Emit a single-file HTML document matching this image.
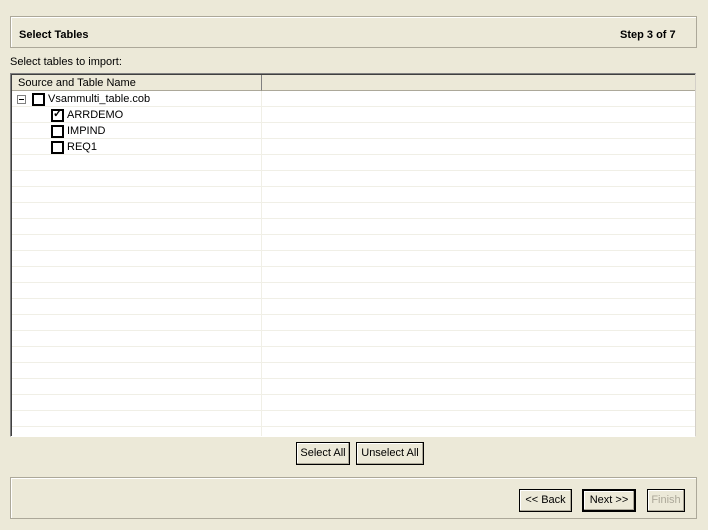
<html><head><style>
body{margin:0;width:708px;height:530px;background:#ece9d8;font-family:"Liberation Sans",sans-serif;font-size:11px;position:relative;overflow:hidden}
.a{position:absolute}
.btn{position:absolute;border:1px solid #000;background:#ece9d8;box-shadow:inset -1px -1px #aca899,inset 1px 1px #fff;text-align:center;box-sizing:border-box;line-height:21px}
.cb{position:absolute;width:9px;height:9px;border:2px solid #000;background:#fff}
.row{position:absolute;left:1px;width:683px;height:15px;border-bottom:1px solid #f0efe6}
</style></head><body>
<div class="a" style="left:10px;top:16px;width:685px;height:30px;border:1px solid #aca899;box-shadow:inset 1px 1px #fff"></div>
<div class="a" style="left:19px;top:29px;font-weight:bold">Select Tables</div>
<div class="a" style="left:620px;top:29px;font-weight:bold">Step 3 of 7</div>
<div class="a" style="left:10px;top:56px">Select tables to import:</div>
<div class="a" style="left:10px;top:73px;width:684px;height:362px;border:1px solid #808080;border-right-color:#d4d0c8;border-bottom-color:#fff;box-shadow:inset 1px 1px #404040;background:#fff;overflow:hidden">
<div class="a" style="left:1px;top:1px;width:243px;height:15px;background:#ece9d8;border-right:1px solid #808080;border-bottom:1px solid #aca899;padding-left:6px;line-height:16px">Source and Table Name</div>
<div class="a" style="left:251px;top:1px;width:440px;height:15px;background:#ece9d8;border-bottom:1px solid #aca899"></div>
<div class="a" style="left:250px;top:17px;width:1px;height:350px;background:#f0efe6"></div>
<div id="rows"></div>
</div>
<div class="a" style="left:17px;top:95px;width:7px;height:7px;border:1px solid #808080;background:#fff"></div>
<div class="a" style="left:19px;top:99px;width:5px;height:1px;background:#000"></div>
<div class="cb" style="left:32px;top:93px"></div><div class="a" style="left:48px;top:93px">Vsammulti_table.cob</div>
<div class="cb" style="left:51px;top:109px"></div><div class="a" style="left:53px;top:107px;font-size:11px;font-weight:bold">✓</div><div class="a" style="left:67px;top:109px">ARRDEMO</div>
<div class="cb" style="left:51px;top:125px"></div><div class="a" style="left:67px;top:125px">IMPIND</div>
<div class="cb" style="left:51px;top:141px"></div><div class="a" style="left:67px;top:141px">REQ1</div>
<div class="btn" style="left:296px;top:442px;width:54px;height:23px">Select All</div>
<div class="btn" style="left:356px;top:442px;width:68px;height:23px">Unselect All</div>
<div class="a" style="left:10px;top:477px;width:685px;height:40px;border:1px solid #aca899;box-shadow:inset 1px 1px #fff"></div>
<div class="btn" style="left:519px;top:489px;width:53px;height:23px">&lt;&lt; Back</div>
<div class="btn" style="left:582px;top:489px;width:54px;height:23px;border-width:2px;line-height:19px">Next &gt;&gt;</div>
<div class="btn" style="left:647px;top:489px;width:38px;height:23px;color:#aca899">Finish</div>
<script>
var h='';for(var i=0;i<22;i++)h+='<div class="row" style="top:'+(17+i*16)+'px"></div>';document.getElementById('rows').innerHTML=h;
</script>
</body></html>
